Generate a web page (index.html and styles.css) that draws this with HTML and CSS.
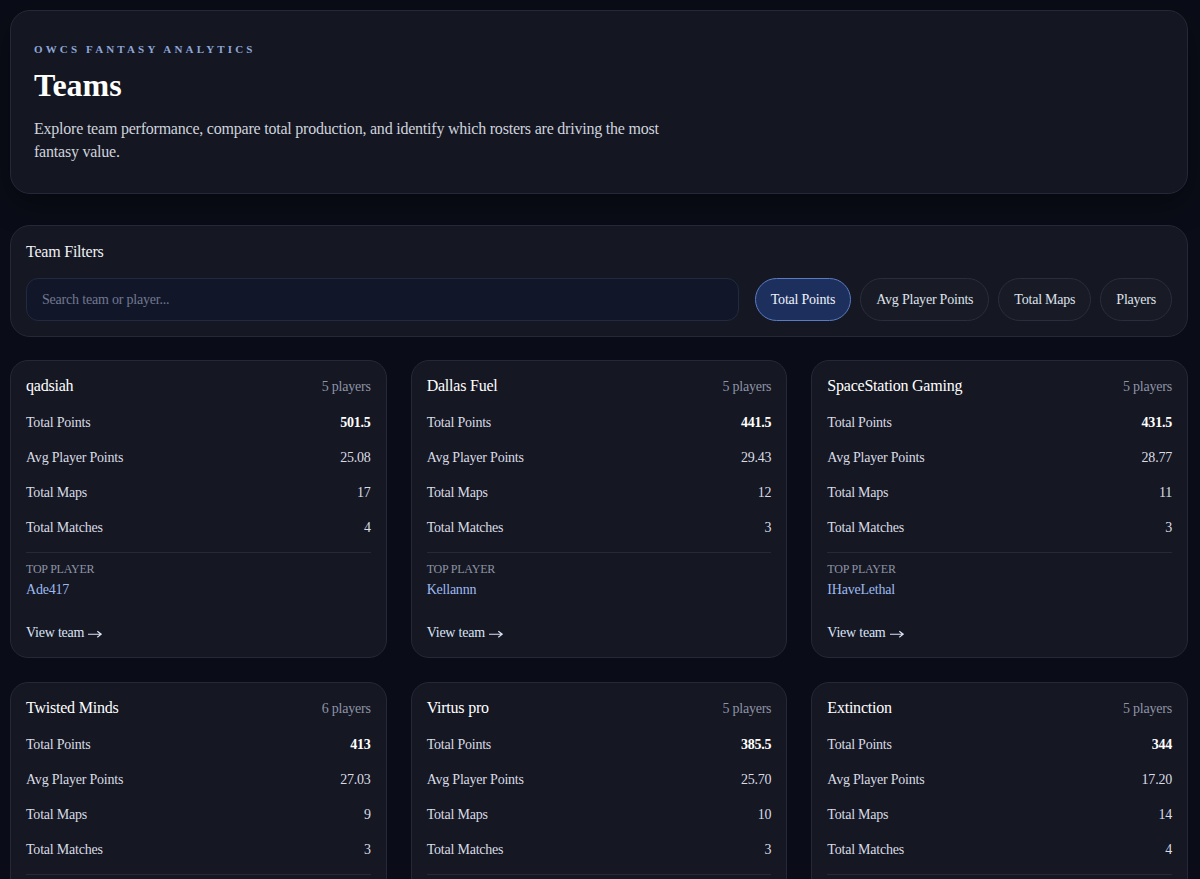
FILE: index.html
```html
<!DOCTYPE html>
<html lang="en">
<head>
<meta charset="utf-8">
<title>Teams</title>
<link rel="stylesheet" href="styles.css">
</head>
<body>
<main class="page">
  <section class="hero">
    <div class="eyebrow">OWCS Fantasy Analytics</div>
    <h1 class="title">Teams</h1>
    <p class="lead">Explore team performance, compare total production, and identify which rosters are driving the most fantasy value.</p>
  </section>

  <section class="filters">
    <div class="filters-title">Team Filters</div>
    <div class="filters-row">
      <input class="search" type="text" placeholder="Search team or player...">
      <div class="sort-group">
        <button class="pill active">Total Points</button>
        <button class="pill">Avg Player Points</button>
        <button class="pill">Total Maps</button>
        <button class="pill">Players</button>
      </div>
    </div>
  </section>

  <section class="grid">
    <article class="card">
      <div class="card-head"><span class="team">qadsiah</span><span class="count">5 players</span></div>
      <div class="stat"><span>Total Points</span><span class="strong">501.5</span></div>
      <div class="stat"><span>Avg Player Points</span><span>25.08</span></div>
      <div class="stat"><span>Total Maps</span><span>17</span></div>
      <div class="stat"><span>Total Matches</span><span>4</span></div>
      <div class="top">
        <div class="top-label">Top Player</div>
        <div class="top-name">Ade417</div>
      </div>
      <a class="view" href="#">View team <svg class="arrow" viewBox="0 0 14 8" aria-hidden="true"><path d="M0 4.2H13M9.3 1.2L13.2 4.2L9.3 7.2"/></svg></a>
    </article>
    <article class="card">
      <div class="card-head"><span class="team">Dallas Fuel</span><span class="count">5 players</span></div>
      <div class="stat"><span>Total Points</span><span class="strong">441.5</span></div>
      <div class="stat"><span>Avg Player Points</span><span>29.43</span></div>
      <div class="stat"><span>Total Maps</span><span>12</span></div>
      <div class="stat"><span>Total Matches</span><span>3</span></div>
      <div class="top">
        <div class="top-label">Top Player</div>
        <div class="top-name">Kellannn</div>
      </div>
      <a class="view" href="#">View team <svg class="arrow" viewBox="0 0 14 8" aria-hidden="true"><path d="M0 4.2H13M9.3 1.2L13.2 4.2L9.3 7.2"/></svg></a>
    </article>
    <article class="card">
      <div class="card-head"><span class="team">SpaceStation Gaming</span><span class="count">5 players</span></div>
      <div class="stat"><span>Total Points</span><span class="strong">431.5</span></div>
      <div class="stat"><span>Avg Player Points</span><span>28.77</span></div>
      <div class="stat"><span>Total Maps</span><span>11</span></div>
      <div class="stat"><span>Total Matches</span><span>3</span></div>
      <div class="top">
        <div class="top-label">Top Player</div>
        <div class="top-name">IHaveLethal</div>
      </div>
      <a class="view" href="#">View team <svg class="arrow" viewBox="0 0 14 8" aria-hidden="true"><path d="M0 4.2H13M9.3 1.2L13.2 4.2L9.3 7.2"/></svg></a>
    </article>
    <article class="card">
      <div class="card-head"><span class="team">Twisted Minds</span><span class="count">6 players</span></div>
      <div class="stat"><span>Total Points</span><span class="strong">413</span></div>
      <div class="stat"><span>Avg Player Points</span><span>27.03</span></div>
      <div class="stat"><span>Total Maps</span><span>9</span></div>
      <div class="stat"><span>Total Matches</span><span>3</span></div>
      <div class="top">
        <div class="top-label">Top Player</div>
        <div class="top-name">Shu</div>
      </div>
      <a class="view" href="#">View team <svg class="arrow" viewBox="0 0 14 8" aria-hidden="true"><path d="M0 4.2H13M9.3 1.2L13.2 4.2L9.3 7.2"/></svg></a>
    </article>
    <article class="card">
      <div class="card-head"><span class="team">Virtus pro</span><span class="count">5 players</span></div>
      <div class="stat"><span>Total Points</span><span class="strong">385.5</span></div>
      <div class="stat"><span>Avg Player Points</span><span>25.70</span></div>
      <div class="stat"><span>Total Maps</span><span>10</span></div>
      <div class="stat"><span>Total Matches</span><span>3</span></div>
      <div class="top">
        <div class="top-label">Top Player</div>
        <div class="top-name">Shadowfall</div>
      </div>
      <a class="view" href="#">View team <svg class="arrow" viewBox="0 0 14 8" aria-hidden="true"><path d="M0 4.2H13M9.3 1.2L13.2 4.2L9.3 7.2"/></svg></a>
    </article>
    <article class="card">
      <div class="card-head"><span class="team">Extinction</span><span class="count">5 players</span></div>
      <div class="stat"><span>Total Points</span><span class="strong">344</span></div>
      <div class="stat"><span>Avg Player Points</span><span>17.20</span></div>
      <div class="stat"><span>Total Maps</span><span>14</span></div>
      <div class="stat"><span>Total Matches</span><span>4</span></div>
      <div class="top">
        <div class="top-label">Top Player</div>
        <div class="top-name">Viper</div>
      </div>
      <a class="view" href="#">View team <svg class="arrow" viewBox="0 0 14 8" aria-hidden="true"><path d="M0 4.2H13M9.3 1.2L13.2 4.2L9.3 7.2"/></svg></a>
    </article>
  </section>
</main>
</body>
</html>
```

FILE: styles.css
```css
* { box-sizing: border-box; }

html, body {
  margin: 0;
  padding: 0;
}

body {
  background: #0a0d17;
  color: #e6e8ee;
  font-family: "Liberation Serif", "Times New Roman", serif;
  letter-spacing: -0.22px;
}

.page {
  padding: 10px 12px 40px 10px;
  display: flex;
  flex-direction: column;
}

.hero {
  background: #141621;
  border: 1px solid #252937;
  border-radius: 20px;
  padding: 31px 23px 30px;
  box-shadow: 0 10px 30px rgba(0, 0, 0, 0.35);
}

.eyebrow {
  font-size: 11px;
  font-weight: 700;
  letter-spacing: 3.15px;
  text-transform: uppercase;
  color: #8ea6d8;
  line-height: 14px;
}

.title {
  margin: 9px 0 0;
  font-size: 32px;
  line-height: 40px;
  font-weight: 700;
  color: #ffffff;
  letter-spacing: 0;
}

.lead {
  margin: 12px 0 0;
  font-size: 16px;
  line-height: 23px;
  color: #cfd3dd;
  max-width: 660px;
}

.filters {
  margin-top: 31px;
  background: #151722;
  border: 1px solid #252937;
  border-radius: 20px;
  padding: 16px 15px 15px;
}

.filters-title {
  font-size: 16px;
  line-height: 20px;
  color: #f1f2f5;
}

.filters-row {
  margin-top: 16px;
  display: flex;
  gap: 16px;
  align-items: center;
}

.search {
  flex: 1;
  height: 43px;
  border-radius: 12px;
  background: #111729;
  border: 1px solid #222a40;
  padding: 0 15px;
  font-family: inherit;
  font-size: 14px;
  letter-spacing: -0.2px;
  color: #e6e8ee;
  outline: none;
}

.search::placeholder { color: #717890; }

.sort-group {
  display: flex;
  gap: 9px;
}

.pill {
  height: 43px;
  padding: 0 15px;
  border-radius: 999px;
  background: #181b26;
  border: 1px solid #2a2e3c;
  color: #dfe2ea;
  font-family: inherit;
  font-size: 14px;
  letter-spacing: -0.22px;
  cursor: pointer;
}

.pill.active {
  background: #1d305d;
  border-color: #5a7bc2;
  color: #eef2fb;
}

.grid {
  margin-top: 23px;
  display: grid;
  grid-template-columns: repeat(3, 1fr);
  gap: 24px;
}

.card {
  background: #151722;
  border: 1px solid #252937;
  border-radius: 18px;
  padding: 16px 15px 15px;
  display: flex;
  flex-direction: column;
}

.card-head {
  display: flex;
  justify-content: space-between;
  align-items: baseline;
  height: 20px;
}

.team {
  font-size: 16px;
  color: #ffffff;
}

.count {
  font-size: 14px;
  color: #8e94a6;
}

.stat {
  display: flex;
  justify-content: space-between;
  font-size: 14px;
  line-height: 18px;
  color: #d9dce4;
  margin-top: 17px;
}

.stat .strong {
  font-weight: 700;
  color: #ffffff;
}

.top {
  margin-top: 15px;
  border-top: 1px solid #262a37;
  padding-top: 8px;
}

.top-label {
  font-size: 12px;
  line-height: 16px;
  text-transform: uppercase;
  color: #8e94a6;
}

.top-name {
  margin-top: 4px;
  font-size: 14px;
  line-height: 18px;
  color: #9dbaf0;
}

.view {
  margin-top: 25px;
  font-size: 14px;
  line-height: 18px;
  color: #dbe4f8;
  text-decoration: none;
  display: flex;
  align-items: center;
  gap: 4px;
}

.arrow {
  width: 14px;
  height: 8px;
  margin-top: 1px;
  fill: none;
  stroke: currentColor;
  stroke-width: 1.1;
}
```
